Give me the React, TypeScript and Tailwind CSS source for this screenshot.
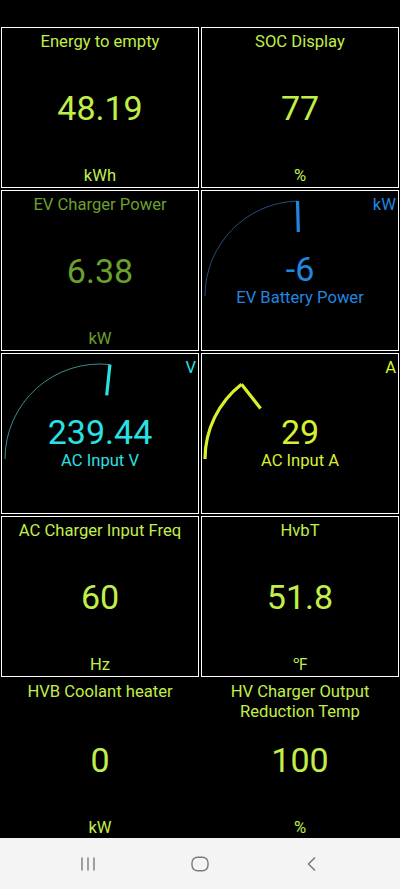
import React from 'react';

type Tile = {
  title: string;
  value: string;
  unit: string;
  color: string;
};

type GaugeTile = {
  label: string;
  value: string;
  unit: string;
  color: string;
  arcColor: string;
  arcWidth: number;
  angle: number; // degrees, 180 = left, 90 = top
};

const font = { fontFamily: 'Roboto, "Noto Sans", "Liberation Sans", sans-serif' };

// plain readout
function ValueCell({ t, border = true }: { t: Tile; border?: boolean }) {
  return (
    <div
      className={`flex h-[161px] flex-col items-center overflow-visible bg-black pb-[2px] text-center border ${
        border ? 'border-white pt-[4px]' : 'border-transparent pt-[2px]'
      }`}
      style={{ color: t.color }}
    >
      <div className="h-[19px] w-full whitespace-pre-line px-1 text-[16.6px] leading-[20px]">{t.title}</div>
      <div className={`${border ? 'mt-[37px]' : 'mt-[39px]'} h-[40px] text-[34px] leading-[40px]`}>{t.value}</div>
      <div className="mt-[38px] h-[19px] text-[16.6px] leading-[19px]">{t.unit}</div>
    </div>
  );
}

// arc gauge readout
function Gauge({ g }: { g: GaugeTile }) {
  const cx = 98;
  const cy = 105;
  const r = 95;
  const rad = (g.angle * Math.PI) / 180;
  const ex = cx + r * Math.cos(rad);
  const ey = cy - r * Math.sin(rad);
  const ir = r - 31;
  const ix = cx + ir * Math.cos(rad);
  const iy = cy - ir * Math.sin(rad);

  return (
    <div className="relative flex h-[161px] flex-col items-center border border-white bg-black pt-[4px]">
      <svg className="absolute inset-0" width="196" height="159" viewBox="0 0 196 159">
        <path
          d={`M ${cx - r} ${cy} A ${r} ${r} 0 0 1 ${ex.toFixed(2)} ${ey.toFixed(2)}`}
          fill="none"
          stroke={g.arcColor}
          strokeWidth={g.arcWidth}
        />
        <line
          x1={ex.toFixed(2)}
          y1={ey.toFixed(2)}
          x2={ix.toFixed(2)}
          y2={iy.toFixed(2)}
          stroke={g.color}
          strokeWidth={3.2}
        />
      </svg>
      <div className="relative flex h-[19px] w-full justify-end pr-[2px] text-[16.6px] leading-[19px]" style={{ color: g.color }}>
        {g.unit}
      </div>
      <div className="relative mt-[36px] h-[38px] text-[34px] leading-[38px]" style={{ color: g.color }}>
        {g.value}
      </div>
      <div className="relative h-[19px] text-[16.6px] leading-[19px]" style={{ color: g.color }}>
        {g.label}
      </div>
    </div>
  );
}

const LIME = '#c2ee4a';

export default function App() {
  return (
    <div className="flex h-[889px] w-[400px] flex-col overflow-hidden bg-black" style={font}>
      <div className="h-[27px] shrink-0" />

      <div className="min-h-0 flex-1 overflow-hidden px-[1px]">
        <div className="grid grid-cols-2 gap-x-[2px] gap-y-[2px]">
          <ValueCell t={{ title: 'Energy to empty', value: '48.19', unit: 'kWh', color: LIME }} />
          <ValueCell t={{ title: 'SOC Display', value: '77', unit: '%', color: LIME }} />

          <ValueCell t={{ title: 'EV Charger Power', value: '6.38', unit: 'kW', color: '#6ba02c' }} />
          <Gauge
            g={{
              label: 'EV Battery Power',
              value: '-6',
              unit: 'kW',
              color: '#2286e0',
              arcColor: '#2a4d7a',
              arcWidth: 1,
              angle: 91.5,
            }}
          />

          <Gauge
            g={{
              label: 'AC Input V',
              value: '239.44',
              unit: 'V',
              color: '#2ae0e4',
              arcColor: '#3d8c8e',
              arcWidth: 1,
              angle: 84,
            }}
          />
          <Gauge
            g={{
              label: 'AC Input A',
              value: '29',
              unit: 'A',
              color: '#d8f02e',
              arcColor: '#d8f02e',
              arcWidth: 3.2,
              angle: 128,
            }}
          />

          <ValueCell t={{ title: 'AC Charger Input Freq', value: '60', unit: 'Hz', color: LIME }} />
          <ValueCell t={{ title: 'HvbT', value: '51.8', unit: '℉', color: LIME }} />

          <ValueCell border={false} t={{ title: 'HVB Coolant heater', value: '0', unit: 'kW', color: LIME }} />
          <ValueCell
            border={false}
            t={{ title: 'HV Charger Output\nReduction Temp', value: '100', unit: '%', color: LIME }}
          />
        </div>
      </div>

      {/* android nav bar */}
      <div className="flex h-[51px] shrink-0 items-center bg-[#f4f4f4] px-[32px]">
        <div className="flex flex-1 justify-center">
          <svg width="18" height="16" viewBox="0 0 18 16">
            <g stroke="#7a7a7a" strokeWidth="1.4">
              <line x1="3" y1="1.5" x2="3" y2="14.5" />
              <line x1="9" y1="1.5" x2="9" y2="14.5" />
              <line x1="15" y1="1.5" x2="15" y2="14.5" />
            </g>
          </svg>
        </div>
        <div className="flex flex-1 justify-center">
          <svg width="18" height="16" viewBox="0 0 18 16">
            <rect x="1" y="1.2" width="16" height="13.6" rx="5.5" fill="none" stroke="#7a7a7a" strokeWidth="1.4" />
          </svg>
        </div>
        <div className="flex flex-1 justify-center">
          <svg width="12" height="16" viewBox="0 0 12 16">
            <polyline points="9,1.5 2.5,8 9,14.5" fill="none" stroke="#7a7a7a" strokeWidth="1.5" />
          </svg>
        </div>
      </div>
    </div>
  );
}
